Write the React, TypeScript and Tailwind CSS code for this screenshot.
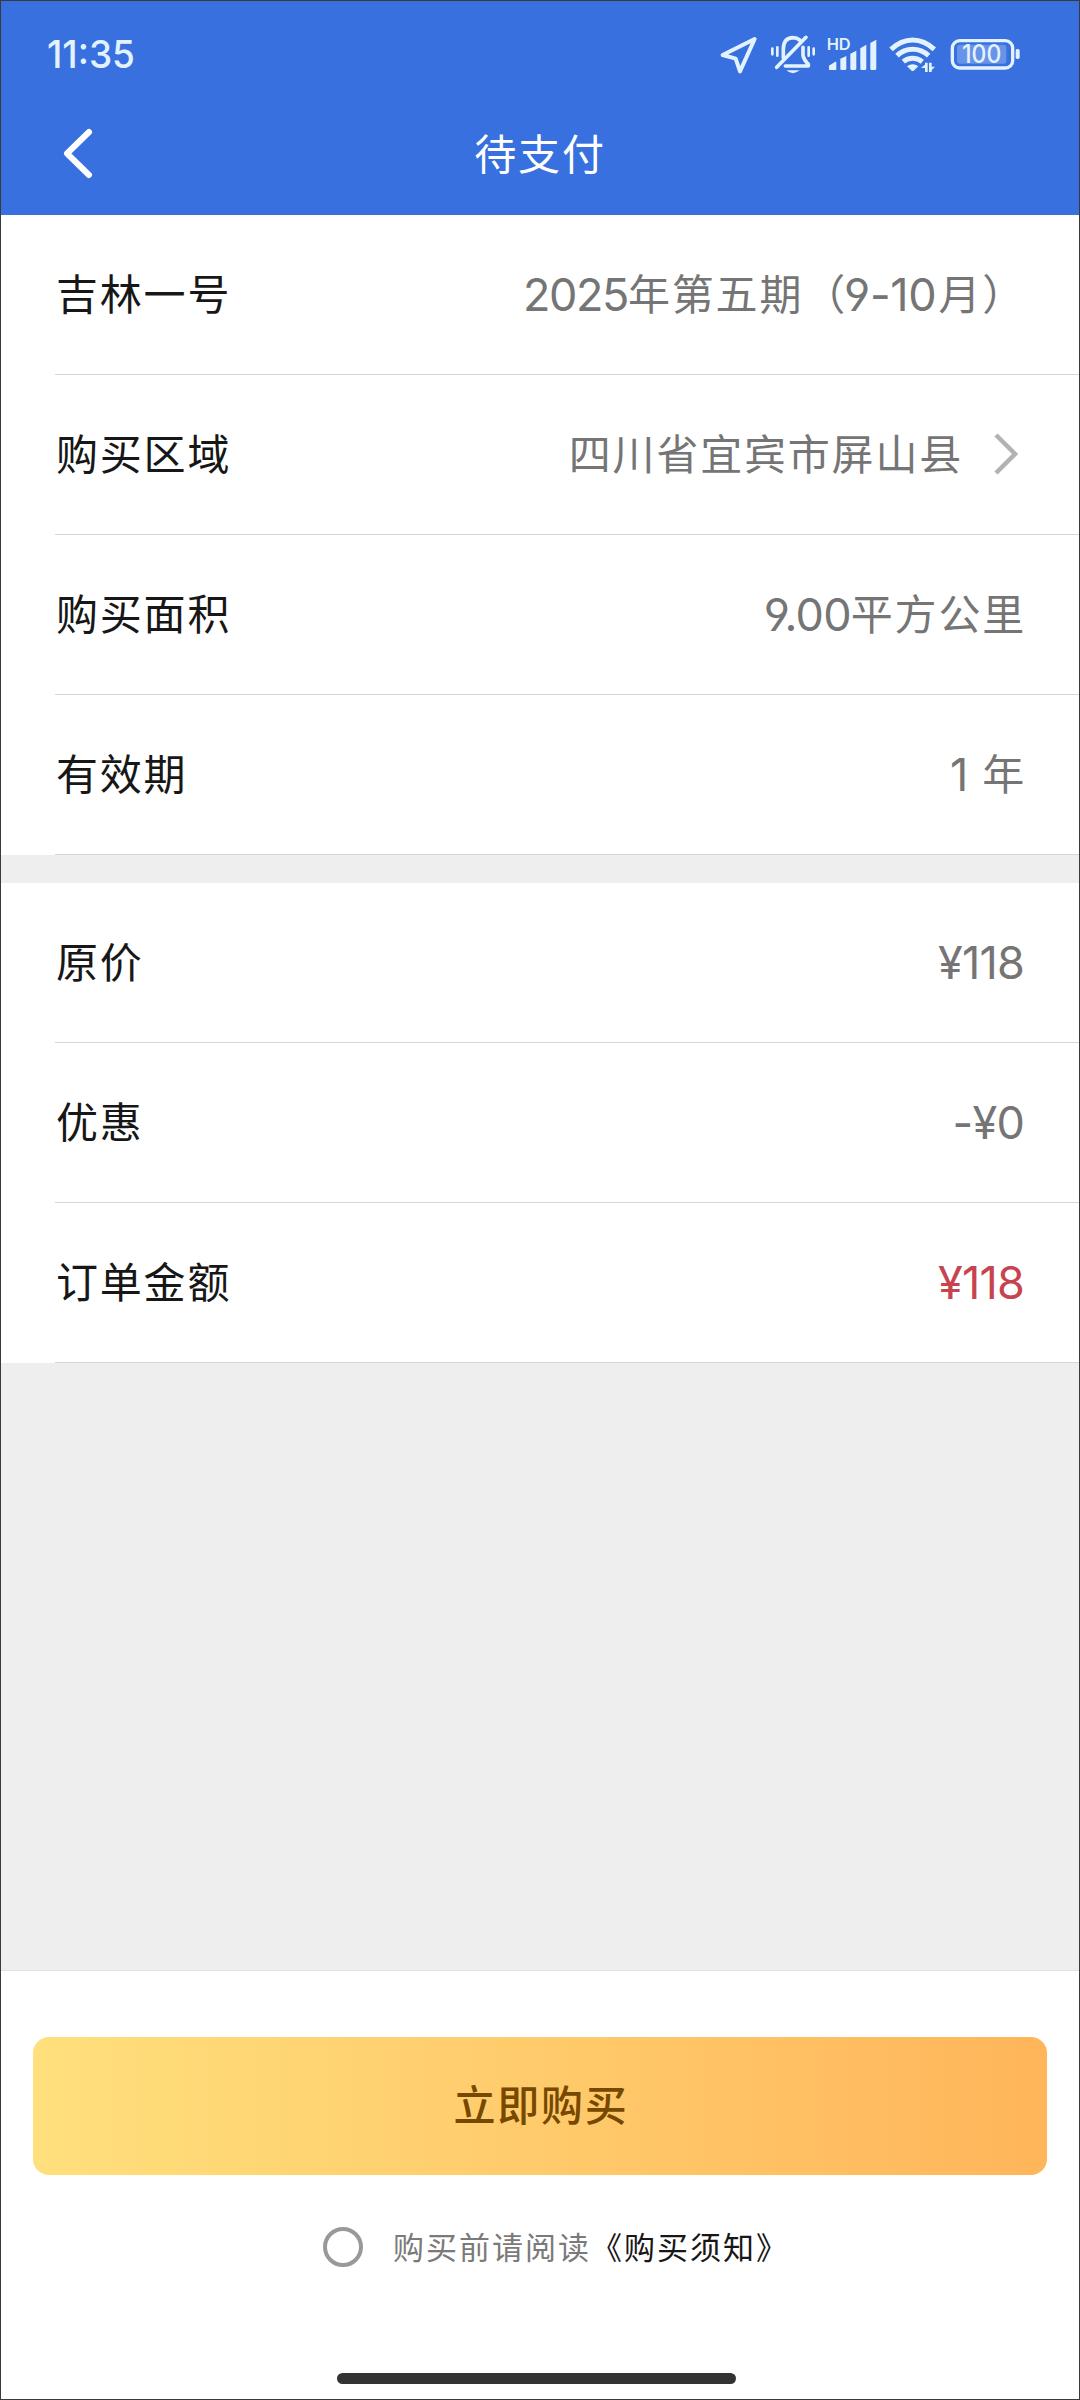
import type { ReactNode } from "react";

const CJK = "font-['Noto_Sans_CJK_SC',sans-serif]";

function Num({ children, className = "" }: { children: ReactNode; className?: string }) {
  return (
    <span className={`mt-[5px] font-['Inter',sans-serif] text-[45px] font-normal [font-feature-settings:'cv04'] ${className}`}>
      {children}
    </span>
  );
}

function Row({ label, children, className = "text-[#757575]" }: { label: string; children: ReactNode; className?: string }) {
  return (
    <div className="ml-[54px] flex h-40 items-center justify-between border-b border-[#d6d6d6] pr-[53px] pb-[5px] leading-none">
      <span className="pl-px text-[42px] tracking-[1.8px] text-[#171717]">{label}</span>
      <span className={`flex items-center text-[42px] tracking-[1.8px] ${className}`}>{children}</span>
    </div>
  );
}

function StatusIcons() {
  return (
    <div className="flex h-[70px] text-[#e3f2ff]">
      {/* location arrow */}
      <svg width="46" height="70" viewBox="54 0 138 210" fill="none" stroke="currentColor" strokeWidth="12" strokeLinejoin="round">
        <path d="M164 57 L68 105 L107 116 L120 154 Z" />
      </svg>
      {/* muted bell */}
      <svg width="58" height="70" viewBox="192 0 174 210" fill="none" stroke="currentColor" strokeWidth="11" strokeLinecap="round" strokeLinejoin="round">
        <path d="M250 114 V88 Q250 54 279 53 Q291 53 299 60" />
        <path d="M309 82 V106 Q311 118 325 133 V138 H256" />
        <path d="M318 52 L230 142" />
        <path d="M259 151 Q279 168 299 151 Z" fill="currentColor" stroke="none" />
        <path d="M217 86 V103 M232 82 V107 M326 82 V107 M341 86 V103" strokeWidth="8" />
      </svg>
      {/* signal */}
      <svg width="61.3" height="70" viewBox="366 0 184 210" fill="currentColor">
        <text x="380" y="90" fontFamily="Inter, sans-serif" fontSize="48" fontWeight="600" textLength="72" lengthAdjust="spacingAndGlyphs">HD</text>
        <path d="M389 148 V138 L407 127 V148 Z" stroke="currentColor" strokeWidth="4" strokeLinejoin="round" />
        <path d="M421 146 V116 L439 108 V146 Q439 150 435 150 H425 Q421 150 421 146Z" />
        <path d="M451 146 V101 L469 92 V146 Q469 150 465 150 H455 Q451 150 451 146Z" />
        <path d="M481 146 V85 L499 74 V146 Q499 150 495 150 H485 Q481 150 481 146Z" />
        <path d="M511 146 V69 L529 59 V146 Q529 150 525 150 H515 Q511 150 511 146Z" />
      </svg>
      {/* wifi */}
      <svg width="60" height="70" viewBox="550 0 180 210" fill="none" stroke="currentColor" strokeWidth="15">
        <path d="M574 88 Q604 60 639 60 Q674 60 704 88" />
        <path d="M592 107 Q612 88 639 88 Q666 88 687 107" />
        <path d="M611 125 Q623 115 639 115 Q655 115 668 125" />
        <path d="M622 139 Q639 126 656 139 L642 152 Q639 154 636 152Z" fill="currentColor" stroke="none" />
        <path d="M680 156 V128 M692 128 V156" strokeWidth="8" />
        <path d="M664 144 L682 129 V144Z M690 140 H706 L691 155Z" fill="currentColor" stroke="none" />
      </svg>
      {/* battery */}
      <svg width="81.7" height="70" viewBox="730 0 245 210" fill="currentColor">
        <rect x="758" y="62" width="181" height="82" rx="22" fill="none" stroke="currentColor" strokeWidth="10" />
        <rect x="772" y="74" width="148" height="57" rx="9" opacity="0.28" />
        <rect x="948" y="87" width="12" height="30" rx="5" />
        <text x="787" y="130" fontFamily="Inter, sans-serif" fontSize="75" fontWeight="500" textLength="118" lengthAdjust="spacingAndGlyphs">100</text>
      </svg>
    </div>
  );
}

export default function App() {
  return (
    <div className={`flex h-[2400px] w-[1080px] flex-col border border-[#3a3a3a] bg-[#eeeeee] ${CJK}`}>
      <header className="h-[214px] bg-[#3870df]">
        <div className="flex items-start justify-between pt-[19px] pr-[54px] pl-[37px]">
          <svg width="110" height="70" viewBox="-8 0 110 70" fill="#e3f2ff">
            <text x="1" y="48" fontFamily="Inter, sans-serif" fontSize="38.5" fontWeight="500" textLength="88" lengthAdjust="spacingAndGlyphs">11:35</text>
          </svg>
          <StatusIcons />
        </div>
        <div className="grid h-[126px] grid-cols-[1fr_auto_1fr] items-center pl-[60px]">
          <svg width="34" height="56" viewBox="0 0 34 56" fill="none" stroke="white" strokeWidth="6" strokeLinecap="round" strokeLinejoin="round">
            <path d="M28 7 L6 28.500 L28 50" />
          </svg>
          <h1 className="-ml-[60px] pb-[3px] text-[42px] leading-none tracking-[1.8px] text-white">待支付</h1>
        </div>
      </header>

      <section className="bg-white">
        <Row label="吉林一号">
          <Num className="tracking-[-1.4px]">2025</Num>
          <span className="-mr-[3px]">年第五期（</span>
          <Num className="mr-[2px] tracking-[-0.3px]">9-10</Num>
          <span>月）</span>
        </Row>
        <Row label="购买区域">
          <span>四川省宜宾市屏山县</span>
          <svg className="mt-[4px] mr-[4px] ml-[27px]" width="32" height="46" viewBox="0 0 32 46" fill="none" stroke="#b2b2b2" strokeWidth="4.500">
            <path d="M6 4 L25 23 L6 42" />
          </svg>
        </Row>
        <Row label="购买面积">
          <Num className="tracking-[-0.8px]">9.00</Num>
          <span>平方公里</span>
        </Row>
        <Row label="有效期">
          <Num>1</Num>
          <span className="ml-3">年</span>
        </Row>
      </section>

      <section className="mt-7 bg-white">
        <Row label="原价">
          <Num className="mr-[2px] tracking-[-0.8px]">¥118</Num>
        </Row>
        <Row label="优惠">
          <Num className="mr-[2px] tracking-[-0.8px]">-¥0</Num>
        </Row>
        <Row label="订单金额" className="text-[#c64450]">
          <Num className="mr-[2px] tracking-[-0.8px]">¥118</Num>
        </Row>
      </section>

      <footer className="mt-auto flex h-[429px] flex-col border-t border-[#e2e2e2] bg-white">
        <button className="mx-8 mt-[66px] h-[138px] shrink-0 rounded-2xl bg-linear-to-r from-[#ffe07c] to-[#ffb55a] pb-[6px] pl-[2px] text-[42px] leading-none font-medium tracking-[1.8px] text-[#764800]">
          立即购买
        </button>
        <label className="mt-[52px] ml-[322px] flex h-10 items-center text-[31px] leading-none tracking-[2px]">
          <span className="size-10 rounded-full border-4 border-[#999]" />
          <span className="mb-[3px] ml-[30px] text-[#7a7a7a]">购买前请阅读</span>
          <span className="mb-[3px] text-[#171717]">《购买须知》</span>
        </label>
        <div className="mt-auto mb-[15px] ml-[336px] h-[11px] w-[399px] rounded-full bg-[#333]" />
      </footer>
    </div>
  );
}
